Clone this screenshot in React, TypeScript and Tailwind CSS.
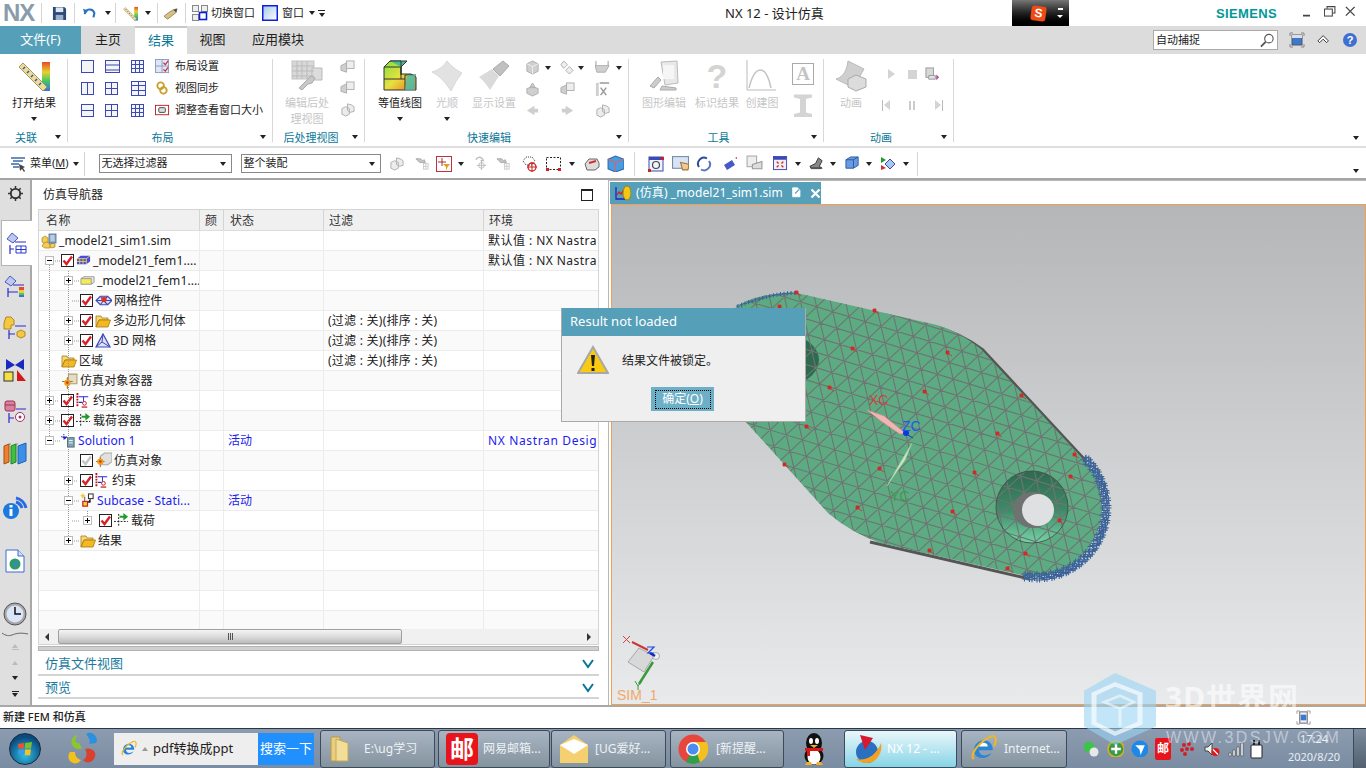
import React from "react";

const cjk = "font-['Noto_Sans','Noto_Sans_CJK_SC',sans-serif]";

const Caret = ({ className = "" }: { className?: string }) => (
  <span className={`inline-block shrink-0 w-0 h-0 border-x-[3.5px] border-x-transparent border-t-[4px] border-t-[#222] ${className}`} />
);

const Sep = ({ className = "" }: { className?: string }) => <span className={`w-px h-[20px] bg-[#d4d4d4] ${className}`} />;

// tiny svg wrapper, most icons live on a 16 grid
const Ic = ({ s = 16, vb = "0 0 16 16", className = "", children }: { s?: number; vb?: string; className?: string; children: React.ReactNode }) => (
  <svg width={s} height={s} viewBox={vb} className={`shrink-0 ${className}`}>
    {children}
  </svg>
);

const Layout = ({ v = [], h = [], w = 13, hh = 13 }: { v?: number[]; h?: number[]; w?: number; hh?: number }) => (
  <svg width={w} height={hh} viewBox={`0 0 ${w} ${hh}`} className="shrink-0">
    <rect x="0.5" y="0.5" width={w - 1} height={hh - 1} fill="#f4f4f4" stroke="#3a49b5" />
    {v.map((x) => (
      <line key={x} x1={x} x2={x} y1="0" y2={hh} stroke="#3a49b5" />
    ))}
    {h.map((y) => (
      <line key={y} x1="0" x2={w} y1={y} y2={y} stroke="#3a49b5" />
    ))}
  </svg>
);

const RulerIcon = ({ s = 32 }: { s?: number }) => (
  <Ic s={s} vb="0 0 32 32">
    <defs>
      <linearGradient id="rain" x1="0" y1="0" x2="0" y2="1">
        <stop offset="0" stopColor="#e84b2a" />
        <stop offset="0.35" stopColor="#e8d030" />
        <stop offset="0.65" stopColor="#45c860" />
        <stop offset="1" stopColor="#3a70e0" />
      </linearGradient>
    </defs>
    <rect x="24" y="2" width="8" height="29" fill="url(#rain)" />
    <path d="M1 7L5 3L29 27L25 31Z" fill="#ecdc9a" stroke="#a89858" />
    <path d="M5 9l2-2M9 13l2-2M13 17l2-2M17 21l2-2M21 25l2-2" stroke="#3a49b5" strokeWidth="1.4" />
  </Ic>
);

const Check = ({ gray = false }: { gray?: boolean }) => (
  <Ic s={13} vb="0 0 13 13">
    <rect x="0.5" y="0.5" width="12" height="12" fill="#fff" stroke="#222" />
    <path d="M2.5 6.5L5.5 10L11 2.5" fill="none" stroke={gray ? "#c4c4c4" : "#d8202a"} strokeWidth="2.4" />
  </Ic>
);

const Expander = ({ t }: { t: string }) => (
  <span className="relative z-10 w-[9px] h-[9px] border border-[#bbb] bg-white flex items-center justify-center">
    <span className="absolute w-[5px] h-px bg-black" />
    {t === "+" && <span className="absolute h-[5px] w-px bg-black" />}
  </span>
);

const Folder = () => (
  <Ic s={16}>
    <path d="M1 3h5l1 2h6v2H4L1 14Z" fill="#f6d77c" stroke="#a87a10" strokeWidth="0.8" />
    <path d="M4 7h11.5L13 14H1Z" fill="#f4b820" stroke="#a87a10" strokeWidth="0.8" />
  </Ic>
);

const SimFile = () => (
  <Ic s={16}>
    <path d="M1 5l3-2 3 2v4l-3 2-3-2z" fill="#f4cc5a" stroke="#b08a20" strokeWidth="0.8" />
    <path d="M3 10l3-1 3 2v4H4l-3-2z" fill="#f4cc5a" stroke="#b08a20" strokeWidth="0.8" />
    <path d="M9 11l3-1 2 1v3l-3 1-2-1z" fill="#f4cc5a" stroke="#b08a20" strokeWidth="0.8" />
    <rect x="8" y="1" width="7" height="9" fill="#8fb0cc" stroke="#48688a" strokeWidth="0.8" />
    <path d="M9.5 3h4M9.5 5h4M9.5 7h4" stroke="#dfeaf4" />
  </Ic>
);

const FemIcon = () => (
  <Ic s={15}>
    <path d="M1 6l4-3h10v6l-4 3H1z" fill="#4a4ae0" />
    <path d="M1 6h10v6M11 6l4-3M4 6v6M7.5 6v6M1 9h10" stroke="#f0e040" strokeWidth="0.9" fill="none" />
  </Ic>
);

const PolyGeom = () => (
  <Ic s={15}>
    <path d="M1 6l3-2h11v6l-3 2" fill="#e8e8e8" stroke="#999" />
    <path d="M1 6h11v6H1z" fill="#f4ec50" stroke="#999" />
  </Ic>
);

const MeshCtrl = () => (
  <Ic s={17}>
    <path d="M1 8l4-4h7l4 4-4 4H5z" fill="#d8dcf4" stroke="#3a49b5" />
    <path d="M5 4l3 4 4-4M5 12l3-4 4 4M1 8h15" stroke="#3a49b5" fill="none" />
    <circle cx="8.5" cy="7" r="2.5" fill="#e03020" />
  </Ic>
);

const Mesh3d = () => (
  <Ic s={16}>
    <path d="M8 1L1 14h14z" fill="#dfe2fa" stroke="#3a49b5" strokeWidth="1.2" />
    <path d="M8 1l-1 8-6 5M7 9l8 5" stroke="#3a49b5" fill="none" />
  </Ic>
);

const Constraint = () => (
  <Ic s={15}>
    <path d="M1.5 0v15" stroke="#c01818" strokeWidth="2" strokeDasharray="2 1" />
    <path d="M3 4h10M3 10h4" stroke="#2a2ad0" strokeWidth="1.2" />
    <path d="M8 4v5" stroke="#2a2ad0" />
    <circle cx="9" cy="11" r="2" fill="none" stroke="#c01818" />
    <path d="M6 15h6" stroke="#c01818" strokeWidth="1.3" />
  </Ic>
);

const Load = () => (
  <Ic s={15}>
    <path d="M0 9h15M5 1v14" stroke="#111" strokeDasharray="2 1.5" />
    <path d="M6 3h4V0l5 4-5 4V5H6z" fill="#1f9a2c" />
  </Ic>
);

const SimObj = () => (
  <Ic s={17}>
    <path d="M5 4l4-3h7v8l-4 3H5z" fill="#e0e0e0" stroke="#aaa" />
    <path d="M1 9h8M5 5v9" stroke="#a07018" />
    <circle cx="5" cy="9" r="3" fill="#f0a018" />
    <circle cx="5" cy="9" r="1.2" fill="#d83020" />
  </Ic>
);

const SimContainer = () => (
  <Ic s={17}>
    <path d="M7 2h8v9H7z" fill="#e4dcc4" stroke="#b0a070" />
    <path d="M1 9h10M6 5v11" stroke="#a07018" />
    <circle cx="6" cy="10" r="3" fill="#f0a018" />
    <circle cx="6" cy="10" r="1.2" fill="#d83020" />
  </Ic>
);

const SolutionIc = () => (
  <Ic s={15}>
    <path d="M0 4h6M3 1v6" stroke="#2a3ad0" strokeWidth="1.2" strokeDasharray="1.5 1" />
    <path d="M1 4l3 3 3-3" fill="#1a2ab0" />
    <rect x="7" y="5" width="7" height="10" fill="#7fa4b4" stroke="#4f6a78" />
    <path d="M8.5 8h4M8.5 10.5h4" stroke="#dff" />
  </Ic>
);

const SubcaseIc = () => (
  <Ic s={15}>
    <path d="M3 0l1 2 2 1-2 1-1 2-1-2-2-1 2-1z" fill="#f4c820" />
    <rect x="9" y="1" width="5" height="5" fill="#fff" stroke="#222" />
    <rect x="3" y="9" width="5" height="5" fill="#f4d040" stroke="#d02018" strokeWidth="1.3" />
    <path d="M11 6v4H8M5 4v5" stroke="#555" />
  </Ic>
);

type Row = {
  level: number;
  exp?: string;
  check?: "red" | "gray";
  icon?: React.ReactNode;
  label?: string;
  blue?: boolean;
  status?: string;
  filter?: boolean;
  env?: string;
  envBlue?: boolean;
};

const rows: Row[] = [
  { level: -1, icon: <SimFile />, label: "_model21_sim1.sim", env: "默认值 : NX Nastra" },
  { level: 0, exp: "-", check: "red", icon: <FemIcon />, label: "_model21_fem1....", env: "默认值 : NX Nastra" },
  { level: 1, exp: "+", icon: <PolyGeom />, label: "_model21_fem1...." },
  { level: 1, check: "red", icon: <MeshCtrl />, label: "网格控件" },
  { level: 1, exp: "+", check: "red", icon: <Folder />, label: "多边形几何体", filter: true },
  { level: 1, exp: "+", check: "red", icon: <Mesh3d />, label: "3D 网格", filter: true },
  { level: 0, icon: <Folder />, label: "区域", filter: true },
  { level: 0, icon: <SimContainer />, label: "仿真对象容器" },
  { level: 0, exp: "+", check: "red", icon: <Constraint />, label: "约束容器" },
  { level: 0, exp: "+", check: "red", icon: <Load />, label: "载荷容器" },
  { level: 0, exp: "-", icon: <SolutionIc />, label: "Solution 1", blue: true, status: "活动", env: "NX Nastran Desig", envBlue: true },
  { level: 1, check: "gray", icon: <SimObj />, label: "仿真对象" },
  { level: 1, exp: "+", check: "red", icon: <Constraint />, label: "约束" },
  { level: 1, exp: "-", icon: <SubcaseIc />, label: "Subcase - Stati...", blue: true, status: "活动" },
  { level: 2, exp: "+", check: "red", icon: <Load />, label: "载荷" },
  { level: 1, exp: "+", icon: <Folder />, label: "结果" },
  { level: 1 },
  { level: 1 },
  { level: 1 },
  { level: 1 },
];

const indent: Record<number, string> = { [-1]: "pl-[2px]", 0: "pl-[6px]", 1: "pl-[25px]", 2: "pl-[44px]" };

const TreeRow = ({ r, i }: { r: Row; i: number }) => (
  <div className={`flex h-[20px] border-b border-[#ececec] text-[12px] leading-[19px] ${i % 2 ? "bg-[#fafafa]" : "bg-white"}`}>
    <div className={`w-[161px] shrink-0 flex items-center gap-[2px] border-r border-[#ececec] overflow-hidden whitespace-nowrap ${indent[r.level]} ${r.blue ? "text-[#1c1cf0]" : "text-[#222]"}`}>
      {r.label && r.level >= 0 && <span className="w-[9px] mr-[5px] shrink-0 flex">{r.exp && <Expander t={r.exp} />}</span>}
      {r.check && <Check gray={r.check === "gray"} />}
      {r.icon}
      {r.label && <span className="tracking-[0.1px]">{r.label}</span>}
    </div>
    <div className="w-[24px] shrink-0 border-r border-[#ececec]" />
    <div className="w-[100px] shrink-0 border-r border-[#ececec] pl-[4px] text-[#1c1cf0]">{r.status}</div>
    <div className="w-[160px] shrink-0 border-r border-[#ececec] pl-[4px] text-[#222] tracking-[0.25px] whitespace-nowrap">{r.filter && "(过滤 : 关)(排序 : 关)"}</div>
    <div className={`w-[113px] shrink-0 pl-[4px] overflow-hidden whitespace-nowrap ${r.envBlue ? "text-[#1c1cf0] tracking-[0.65px]" : "text-[#222] tracking-[0.45px]"}`}>{r.env}</div>
  </div>
);

const TreeGuides = () => (
  <svg className="absolute left-0 top-0 pointer-events-none" width="160" height="320" stroke="#999" strokeDasharray="1 1" fill="none">
    <path d="M10.5 26V205" />
    <path d="M29.5 40V305" />
    <path d="M48.5 280V290" />
    <path d="M14 30h8M14 170h6M14 190h8M14 210h7" />
    <path d="M33 50h7M33 70h7M33 90h7M33 110h7M33 250h6M33 270h7M33 290h7M33 310h7" />
  </svg>
);

// the mesh part, coordinates are screen pixels
const partPath =
  "M745 421L700 350Q715 320 738 306Q755 293 797 293L937 325Q960 332 981 349L1083 459A70 70 0 0 1 1030 577L880 543Q850 532 828 513Z";

const meshLines = (() => {
  const out: string[] = [];
  const cx = 920;
  const cy = 430;
  [17, 77, 137].forEach((deg) => {
    const a = (deg * Math.PI) / 180;
    const dx = Math.cos(a);
    const dy = Math.sin(a);
    for (let k = -26; k <= 26; k++) {
      const ox = cx - dy * k * 14.6;
      const oy = cy + dx * k * 14.6;
      out.push(`M${ox - dx * 420} ${oy - dy * 420}L${ox + dx * 420} ${oy + dy * 420}`);
    }
  });
  return out.join("");
})();

const fringe = (() => {
  const out: string[] = [];
  for (let d = -46; d <= 100; d += 2) {
    const a = (d * Math.PI) / 180;
    [67, 70, 72].forEach((r0, n) => {
      const r = r0 - ((d + n * 2) % 6 === 0 ? 1.5 : 0);
      const x = 1037 + Math.cos(a) * r;
      const y = 508 + Math.sin(a) * r;
      out.push(`M${x - 2.5} ${y}h5M${x} ${y - 2.5}v5`);
    });
  }
  for (let t = 0; t <= 1; t += 0.06) {
    const x = 738 + t * 59;
    const y = 306 - Math.sin(t * 1.6) * 13;
    out.push(`M${x - 2} ${y}h4M${x} ${y - 2}v4`);
  }
  return out.join("");
})();

const loads = [
  [780, 307], [797, 293], [875, 311], [853, 349], [948, 353], [830, 388], [925, 392], [1022, 396], [807, 427], [998, 434],
  [1075, 455], [1071, 477], [785, 465], [880, 469], [975, 473], [858, 508], [953, 512], [1060, 521], [930, 551], [1026, 554], [1008, 569],
];

const PartView = () => (
  <svg className="absolute left-0 top-0" width="754" height="501" viewBox="612 205 754 501">
    <defs>
      <clipPath id="pc">
        <path d={partPath} />
      </clipPath>
      <linearGradient id="cone" x1="0" y1="0" x2="0" y2="1">
        <stop offset="0" stopColor="#2e6a50" />
        <stop offset="0.55" stopColor="#3f8a68" />
        <stop offset="1" stopColor="#74d4a6" />
      </linearGradient>
    </defs>
    <path d="M936 327Q960 333 983 350L1085 460" fill="none" stroke="#555" strokeWidth="3" />
    <path d="M870 542L1030 579" fill="none" stroke="#555" strokeWidth="3" />
    <path d={partPath} fill="#5dab83" />
    <ellipse cx="780" cy="360" rx="39" ry="27" fill="#2e6a50" />
    <circle cx="1032" cy="507" r="36" fill="url(#cone)" />
    <g clipPath="url(#pc)">
      <path d={meshLines} stroke="#6f7472" strokeWidth="1.1" fill="none" />
    </g>
    <circle cx="1032" cy="507" r="36" fill="none" stroke="#3c4a44" strokeWidth="0.8" />
    <ellipse cx="1033" cy="510" rx="20" ry="18" fill="#6e7270" />
    <circle cx="1038" cy="510" r="16" fill="#dfe0e2" />
    <path d={fringe} stroke="#3d6498" strokeWidth="1.1" fill="none" />
    {loads.map(([x, y]) => (
      <path key={`${x}-${y}`} d={`M${x - 2} ${y - 2}h3v3h-3zM${x + 1} ${y + 1}l3 2`} fill="#d22828" stroke="#d22828" strokeWidth="0.8" />
    ))}
    <polygon points="867,410 884,416 905,433 900,434 881,421" fill="#f3b4b4" stroke="#e88" strokeWidth="0.5" />
    <circle cx="906" cy="433" r="3" fill="#0a3ae0" />
    <path d="M906 434l7 4" stroke="#0a3ae0" />
    <polygon points="912,443 896,470 887,486 891,480 905,460" fill="#c8e6c0" stroke="#a8d0a0" strokeWidth="0.5" />
    <text x="869" y="405" fontSize="14" fill="#d84040" fontFamily="Liberation Sans">XC</text>
    <text x="902" y="431" fontSize="14" fill="#1a5af0" fontFamily="Liberation Sans">ZC</text>
    <text x="890" y="501" fontSize="14" fill="#3c9c4c" fontFamily="Liberation Sans">YC</text>
    {/* wcs triad bottom left */}
    <path d="M623 636l7 7M630 636l-7 7" stroke="#d84040" />
    <path d="M632 642l16 8" stroke="#c83838" strokeWidth="2" />
    <path d="M639 648l15 8-10 16-16-10z" fill="#d8d8d8" stroke="#a8a8a8" />
    <circle cx="656" cy="656" r="3.5" fill="#f0f0f0" stroke="#aaa" />
    <path d="M647 647h7l-6 6h6" fill="none" stroke="#1a4ae0" strokeWidth="1.2" />
    <path d="M650 653l5 3" stroke="#0a2ac0" strokeWidth="2.5" />
    <path d="M653 662l-14 22" stroke="#3a9a3a" strokeWidth="2.5" />
    <path d="M635 681l3 5 4-5M638 686v4" fill="none" stroke="#3a9a3a" />
    <text x="617" y="700" fontSize="14" fill="#f2a868" fontFamily="Liberation Sans">SIM_1</text>
  </svg>
);

const GrayBig = ({ d }: { d: React.ReactNode }) => (
  <Ic s={32} vb="0 0 32 32">
    {d}
  </Ic>
);

const BigBtn = ({ icon, label, w, dim = true, arrow = false, label2 }: { icon: React.ReactNode; label: string; w: string; dim?: boolean; arrow?: boolean; label2?: string }) => (
  <div className={`${w} flex flex-col items-center shrink-0`}>
    <div className="h-[33px] mt-[5px] flex items-center">{icon}</div>
    <span className={`text-[11px] leading-[16px] mt-[3px] whitespace-nowrap ${dim ? "text-[#c6c6c6]" : "text-[#222]"}`}>{label}</span>
    {label2 && <span className="text-[11px] leading-[16px] text-[#c6c6c6]">{label2}</span>}
    {arrow && <Caret className="mt-[6px]" />}
  </div>
);

const Group = ({ w, label, children }: { w: string; label: string; children: React.ReactNode }) => (
  <div className={`${w} relative shrink-0 flex flex-col`}>
    <div className="absolute right-0 top-[5px] h-[83px] w-px bg-[#d8d8d8]" />
    <div className="h-[76px] flex">{children}</div>
    <div className="flex-1 flex items-center justify-center relative text-[11px] text-[#0a7799] pr-[16px]">
      {label}
      <Caret className="absolute right-[7px] top-[5px]" />
    </div>
  </div>
);

const GreyMini = ({ kind }: { kind: number }) => {
  const c = "#cfcfcf";
  const e = "#aeaeae";
  if (kind === 0)
    return (
      <Ic s={15}>
        <path d="M2 4l6-3 6 3v8l-6 3-6-3z" fill={c} stroke={e} />
        <path d="M2 4l6 3 6-3M8 7v8" stroke="#eee" fill="none" />
      </Ic>
    );
  if (kind === 1)
    return (
      <Ic s={15}>
        <path d="M4 1l4 4-4 4-3-4zM10 7l4 4-4 4-4-4z" fill="#eee" stroke={e} />
      </Ic>
    );
  if (kind === 2)
    return (
      <Ic s={15}>
        <path d="M0 6h15l-4 7H2z" fill={c} stroke={e} />
        <path d="M1 1v5M14 1v5" stroke="#999" />
      </Ic>
    );
  if (kind === 3)
    return (
      <Ic s={15}>
        <path d="M8 1l-3 5h6zM2 7l6-2 6 2v5l-6 3-6-3z" fill={c} stroke={e} />
      </Ic>
    );
  if (kind === 4)
    return (
      <Ic s={15}>
        <path d="M1 6l6-3v10l-6-2z" fill={c} stroke={e} />
        <rect x="7" y="1" width="8" height="8" fill="#eee" stroke={e} />
      </Ic>
    );
  if (kind === 5)
    return (
      <Ic s={15}>
        <rect x="1" y="1" width="3" height="14" fill={c} />
        <path d="M5 1h10M6 6l6 8M12 6l-6 8" stroke="#999" strokeWidth="1.6" />
      </Ic>
    );
  if (kind === 6)
    return (
      <Ic s={15}>
        <path d="M10 3v3h4v4h-4v3L2 8z" fill={c} />
      </Ic>
    );
  if (kind === 7)
    return (
      <Ic s={15}>
        <path d="M6 3v3H2v4h4v3l8-5z" fill={c} />
      </Ic>
    );
  if (kind === 9)
    return (
      <Ic s={15}>
        <path d="M2 4a4 4 0 0 1 7-1l1 2-3 0" fill="none" stroke="#bbb" strokeWidth="1.4" />
        <circle cx="8" cy="10" r="3" fill="none" stroke="#bbb" />
        <path d="M8 5v10M3 10h10" stroke="#bbb" />
      </Ic>
    );
  if (kind === 10)
    return (
      <Ic s={15}>
        <path d="M1 3h5l2 2 2-1 1 3H5L3 5z" fill="#c4c4c4" stroke="#aaa" />
        <rect x="9" y="8" width="5" height="6" fill="none" stroke="#ccc" />
        <path d="M11.5 8v6M9 11h5" stroke="#ccc" />
      </Ic>
    );
  return (
    <Ic s={15}>
      <path d="M2 7l4-2 4 2v6l-4 2-4-2zM8 2l4 1 3 2v5l-4 1-3-2z" fill="#ececec" stroke={e} />
    </Ic>
  );
};

const TaskBtn = ({ w, icon, label, active = false, gap = "gap-[6px]", className = "" }: { w: string; icon: React.ReactNode; label?: string; active?: boolean; gap?: string; className?: string }) => (
  <div className={`${w} ${className} h-[38px] shrink-0 rounded-[3px] border border-[#3e4a58] flex items-center pl-[7px] ${gap} text-[12px] overflow-hidden whitespace-nowrap ${active ? "bg-linear-to-b from-[#e9f7fb] to-[#85d4e6] text-white" : "bg-linear-to-b from-[#a8b4c2] to-[#84949f] text-[#eef2f6]"}`}>
    {icon}
    {label && <span>{label}</span>}
  </div>
);

const IeIcon = ({ s = 24 }: { s?: number }) => (
  <Ic s={s} vb="0 0 24 24">
    <path d="M4 13c0-5 4-8 8-8s7 3 7 8H8c0 4 5 6 10 2-3 6-14 6-14-2Z" fill="#2a84d8" />
    <path d="M8 10h7c0-4-6-4-7 0Z" fill="#fff" />
    <path d="M20 2c2 1 2 4 0 8M4 20C1 18 4 12 11 6c5-4 9-5 9-4" fill="none" stroke="#f2b820" strokeWidth="1.6" />
  </Ic>
);

export default function App() {
  return (
    <div className={`relative w-[1366px] h-[768px] overflow-hidden bg-white flex flex-col ${cjk} text-[#222]`}>
      {/* title bar */}
      <div className="h-[26px] shrink-0 flex items-center relative text-[11px]">
        <span className="ml-[3px] w-[33px] text-[24px] leading-[26px] font-bold text-[#8a9cac] font-['Liberation_Sans',sans-serif] tracking-[-1px]">NX</span>
        <Sep className="ml-[5px]" />
        <Ic s={15} className="ml-[10px]">
          <path d="M1 1h12l2 2v12H1z" fill="#2c4a78" />
          <rect x="4" y="1.5" width="8" height="5" fill="#dfe8f2" />
          <rect x="4" y="9.5" width="8" height="5.5" fill="#9cb0c8" />
        </Ic>
        <Sep className="ml-[7px]" />
        <Ic s={14} className="ml-[8px]">
          <path d="M2 9c1-6 9-7 11-1l-1 5" fill="none" stroke="#2a74c8" strokeWidth="2.4" />
          <path d="M0 3l6 2-4 5z" fill="#2a74c8" />
        </Ic>
        <Caret className="ml-[8px]" />
        <Sep className="ml-[4px]" />
        <span className="ml-[7px]"><RulerIcon s={15} /></span>
        <Caret className="ml-[7px]" />
        <Sep className="ml-[6px]" />
        <Ic s={15} className="ml-[5px]">
          <path d="M1 11l5-4 5-3 4-1-1 4-4 3-5 4z" fill="#d8c080" stroke="#7a6a40" strokeWidth="0.7" />
          <path d="M11 4l4-1-1 4z" fill="#4a4a4a" />
        </Ic>
        <Sep className="ml-[7px]" />
        <Ic s={16} className="ml-[6px]">
          <rect x="0.5" y="0.5" width="6" height="6" fill="#eee" stroke="#888" />
          <rect x="9.5" y="0.5" width="6" height="6" fill="#eee" stroke="#888" />
          <rect x="0.5" y="9.5" width="6" height="6" fill="#eee" stroke="#888" />
          <rect x="7.5" y="7.5" width="7" height="7" fill="#fff" stroke="#0a22d0" strokeWidth="1.6" />
        </Ic>
        <span className="ml-[3px]">切换窗口</span>
        <Ic s={16} className="ml-[7px]">
          <defs>
            <linearGradient id="win" x1="0" y1="0" x2="1" y2="1">
              <stop offset="0" stopColor="#a8c8e8" />
              <stop offset="1" stopColor="#fff" />
            </linearGradient>
          </defs>
          <rect x="0.75" y="0.75" width="14.5" height="14.5" fill="url(#win)" stroke="#0a22e0" strokeWidth="1.5" />
        </Ic>
        <span className="ml-[4px]">窗口</span>
        <Caret className="ml-[5px]" />
        <span className="ml-[3px] flex flex-col gap-[2px] items-center">
          <span className="w-[7px] h-px bg-[#222]" />
          <Caret />
        </span>
        <span className="absolute left-[725px] top-[4px] text-[13px] leading-[18px] whitespace-nowrap">NX 12 - 设计仿真</span>
        <div className="absolute left-[1012px] top-0 w-[57px] h-[26px] bg-linear-to-b from-[#777] via-[#222] to-black flex items-center pl-[19px]">
          <span className="w-[15px] h-[15px] bg-[#ee4a14] rounded-[3px] rotate-[8deg] text-white text-[12px] leading-[15px] font-bold text-center font-['Liberation_Sans',sans-serif]">S</span>
          <span className="ml-[11px] flex flex-col items-center gap-[5px]">
            <span className="w-[5px] h-[2px] bg-white" />
            <span className="w-0 h-0 border-x-[3px] border-x-transparent border-t-[3px] border-t-white" />
          </span>
        </div>
        <span className="absolute left-[1216px] top-[6px] text-[13px] leading-[16px] font-bold tracking-[0.35px] text-[#009999] font-['Liberation_Sans',sans-serif]">SIEMENS</span>
        <div className="absolute left-[1303px] top-[6px] flex items-center">
          <Ic s={14}>
            <rect x="0" y="10" width="8" height="2" fill="#444" />
          </Ic>
          <Ic s={14} className="ml-[7px]">
            <rect x="0.5" y="3.5" width="9" height="8" fill="#fff" stroke="#444" strokeWidth="1.2" />
            <path d="M3.5 3V0.7h9V8H10" fill="none" stroke="#444" strokeWidth="1.2" />
          </Ic>
          <Ic s={14} className="ml-[7px]">
            <path d="M1 1l10 10M11 1L1 11" stroke="#444" strokeWidth="1.6" />
          </Ic>
        </div>
      </div>

      {/* tabs */}
      <div className="h-[28px] shrink-0 bg-[#dcdcdc] flex items-stretch text-[13px] relative">
        <div className="w-[81px] bg-[#559fb9] text-white flex items-center justify-center">文件(F)</div>
        <div className="w-[54px] flex items-center justify-center">主页</div>
        <div className="w-[52px] bg-white text-[#0a7799] border-t-2 border-[#c8c8c8] flex items-center justify-center">结果</div>
        <div className="w-[51px] flex items-center justify-center">视图</div>
        <div className="ml-[14px] flex items-center">应用模块</div>
        <div className="ml-auto mr-[9px] flex items-center">
          <div className="w-[125px] h-[20px] bg-white border border-[#aaa] flex items-center pl-[2px] pr-[2px] text-[11px]">
            自动捕捉
            <Ic s={15} className="ml-auto">
              <circle cx="9.5" cy="6" r="4.5" fill="#fff" stroke="#555" strokeWidth="1.2" />
              <path d="M6 9.5l-5 5" stroke="#555" strokeWidth="2" />
            </Ic>
          </div>
          <Ic s={16} className="ml-[11px]">
            <path d="M1 4V1h3M12 1h3v3M15 12v3h-3M4 15H1v-3" fill="none" stroke="#888" />
            <rect x="3" y="3" width="10" height="10" fill="#3a7ac8" stroke="#556" />
            <rect x="3" y="3" width="10" height="3" fill="#dde" />
          </Ic>
          <Ic s={14} className="ml-[12px]">
            <path d="M1 9l6-6 6 6-2 2-4-4-4 4z" fill="#fff" stroke="#222" />
          </Ic>
          <span className="ml-[12px] w-[14px] h-[14px] rounded-full bg-[#3f6fd0] text-white text-[11px] leading-[14px] text-center font-bold font-['Liberation_Sans',sans-serif]">?</span>
        </div>
      </div>

      {/* ribbon */}
      <div className="h-[94px] shrink-0 flex border-b-2 border-[#dedede] relative">
        <Group w="w-[68px]" label="关联">
          <BigBtn w="w-[68px]" dim={false} icon={<RulerIcon />} label="打开结果" arrow />
        </Group>
        <Group w="w-[205px]" label="布局">
          <div className="grid grid-cols-[24px_26px_24px] grid-rows-[22px_22px_22px] ml-[13px] mt-[1px] items-center">
            <Layout />
            <Layout w={15} h={[5, 10]} />
            <Layout h={[4.5, 8.5]} v={[4.5, 8.5]} />
            <Layout v={[6.5]} />
            <Layout v={[6.5]} h={[6.5]} />
            <Layout w={15} hh={15} v={[7.5]} h={[4.5, 9.5]} />
            <Layout h={[6.5]} />
            <Layout v={[6.5]} h={[6.5]} />
            <Layout h={[4.5, 8.5]} v={[4.5, 8.5]} />
          </div>
          <div className="flex flex-col mt-[1px] text-[11px] leading-[22px] whitespace-nowrap">
            <div className="flex items-center gap-[5px] h-[22px]">
              <Ic s={15}>
                <rect x="0.5" y="0.5" width="14" height="14" fill="#dfe6f4" stroke="#8a9cc4" />
                <path d="M0 7.5h15M7.5 0v15" stroke="#8a9cc4" />
                <path d="M9 4l2 2 3-4M9 11l2 2 3-4" fill="none" stroke="#d02828" strokeWidth="1.2" />
              </Ic>
              布局设置
            </div>
            <div className="flex items-center gap-[5px] h-[22px]">
              <Ic s={15}>
                <circle cx="6" cy="5" r="3.5" fill="none" stroke="#c8a030" strokeWidth="2" />
                <circle cx="9" cy="10" r="3.5" fill="none" stroke="#c8a030" strokeWidth="2" />
              </Ic>
              视图同步
            </div>
            <div className="flex items-center gap-[5px] h-[22px]">
              <Ic s={15}>
                <rect x="0.5" y="2.5" width="14" height="10" fill="#fff" stroke="#c02020" />
                <rect x="4" y="5" width="7" height="5" rx="1" fill="#ddd" stroke="#444" />
              </Ic>
              调整查看窗口大小
            </div>
          </div>
        </Group>
        <Group w="w-[92px]" label="后处理视图">
          <BigBtn
            w="w-[68px]"
            icon={
              <GrayBig
                d={
                  <>
                    <rect x="1" y="1" width="22" height="18" fill="#d8d8d8" stroke="#c4c4c4" />
                    <path d="M1 6h22M1 11h22M1 16h22M6 1v18M11 1v18M16 1v18M21 8h10v12H21z" stroke="#bbb" fill="#dcdcdc" />
                    <path d="M8 28l8-8 4-4 4 2-3 5-4 1-6 6z" fill="#c8c8c8" stroke="#aaa" />
                  </>
                }
              />
            }
            label="编辑后处"
            label2="理视图"
          />
          <div className="flex flex-col gap-[6px] mt-[6px] ml-[-1px]">
            <GreyMini kind={4} />
            <GreyMini kind={4} />
            <GreyMini kind={8} />
          </div>
        </Group>
        <Group w="w-[264px]" label="快速编辑">
          <BigBtn
            w="w-[70px]"
            dim={false}
            arrow
            label="等值线图"
            icon={
              <Ic s={34} vb="0 0 34 34">
                <defs>
                  <linearGradient id="cg" x1="0" y1="0" x2="1" y2="1">
                    <stop offset="0" stopColor="#80e040" />
                    <stop offset="0.5" stopColor="#e8e040" />
                    <stop offset="1" stopColor="#e87020" />
                  </linearGradient>
                </defs>
                <path d="M1 8l6-6h11v13h10l5 3v13H1z" fill="url(#cg)" stroke="#333" />
                <path d="M1 8h17l0 8M1 20h21v11M18 8V20M22 20l0-4h11" fill="none" stroke="#333" />
                <path d="M18 8l6-6H7M18 2v6" fill="#44c090" stroke="#333" />
                <path d="M24 16l8 0 0 15-10 0z" fill="#40c0b0" opacity="0.8" />
              </Ic>
            }
          />
          <BigBtn
            w="w-[24px]"
            arrow
            label="光顺"
            icon={
              <GrayBig
                d={
                  <path d="M1 12C8 10 13 6 16 1c4 5 9 9 15 12-4 5-8 11-11 18C15 23 9 16 1 12Z" fill="#e2e2e2" stroke="#d8d8d8" />
                }
              />
            }
          />
          <BigBtn
            w="w-[44px] ml-[13px]"
            label="显示设置"
            icon={
              <GrayBig
                d={
                  <>
                    <path d="M1 17l13-8 7 7-9 14c-4-6-7-10-11-13Z" fill="#dadada" />
                    <path d="M15 9l10-8 6 5-9 10z" fill="#c0c0c0" stroke="#aaa" />
                  </>
                }
              />
            }
          />
          <div className="grid grid-cols-[35px_35px_34px] grid-rows-[23px_21px_21px] ml-[9px] mt-[2px] items-center">
            <div className="flex items-center gap-[5px]"><GreyMini kind={0} /><Caret /></div>
            <div className="flex items-center gap-[3px]"><GreyMini kind={1} /><Caret /></div>
            <div className="flex items-center gap-[6px]"><GreyMini kind={2} /><Caret /></div>
            <GreyMini kind={3} />
            <GreyMini kind={4} />
            <GreyMini kind={5} />
            <GreyMini kind={6} />
            <GreyMini kind={7} />
            <GreyMini kind={8} />
          </div>
        </Group>
        <Group w="w-[195px]" label="工具">
          <BigBtn
            w="w-[70px]"
            label="图形编辑"
            icon={
              <GrayBig
                d={
                  <>
                    <path d="M13 2l16-1 1 22-13 2z" fill="#e8e8e8" stroke="#bbb" />
                    <rect x="15" y="5" width="11" height="14" fill="#f6f6f6" />
                    <path d="M2 26l8-9 3 3-7 8zM14 26l14 2v2H12z" fill="#ccc" stroke="#aaa" />
                  </>
                }
              />
            }
          />
          <BigBtn
            w="w-[36px]"
            label="标识结果"
            icon={<span className="text-[34px] leading-[32px] font-bold text-[#d4d4d4] font-['Liberation_Sans',sans-serif]">?</span>}
          />
          <BigBtn
            w="w-[54px]"
            label="创建图"
            icon={
              <GrayBig
                d={
                  <>
                    <path d="M1 0v30h29" fill="none" stroke="#bbb" />
                    <path d="M3 28C9 4 20 4 25 28" fill="none" stroke="#c4c4c4" strokeWidth="1.5" />
                  </>
                }
              />
            }
          />
          <div className="flex flex-col items-center gap-[8px] mt-[9px] ml-[2px]">
            <span className="w-[22px] h-[22px] border border-[#aaa] text-[#c4c4c4] text-[19px] leading-[20px] text-center font-['Liberation_Serif',serif] font-bold">A</span>
            <Ic s={24}>
              <path d="M2 1h12v2l-4 1v9l4 1v2H2v-2l4-1V4L2 3z" fill="#d4d4d4" />
            </Ic>
          </div>
        </Group>
        <Group w="w-[130px]" label="动画">
          <BigBtn
            w="w-[54px]"
            label="动画"
            icon={
              <GrayBig
                d={
                  <>
                    <path d="M1 19C9 17 12 9 13 1l16 8-4 7-12 9z" fill="#cfcfcf" stroke="#bbb" />
                    <path d="M13 19l8-4 10 4v8l-10 4-8-4z" fill="#dcdcdc" stroke="#aaa" />
                  </>
                }
              />
            }
          />
          <div className="grid grid-cols-[27px_14px_26px] grid-rows-[32px_30px] mt-[4px] items-center justify-items-center">
            <span className="w-0 h-0 border-y-[5px] border-y-transparent border-l-[7px] border-l-[#d4d4d4]" />
            <span className="w-[9px] h-[9px] bg-[#d4d4d4]" />
            <Ic s={15}>
              <rect x="1" y="1" width="8" height="10" fill="#d8d8d8" stroke="#999" />
              <path d="M4 9h7v4H4z" fill="#e0e0e0" stroke="#999" />
              <path d="M12 8l3 3-3 3z" fill="#a848a0" />
            </Ic>
            <span className="flex items-center mr-[12px]"><span className="w-px h-[11px] bg-[#bbb] mr-px" /><span className="w-0 h-0 border-y-[5px] border-y-transparent border-r-[6px] border-r-[#d4d4d4]" /></span>
            <span className="flex gap-[2px]"><span className="w-[2px] h-[9px] bg-[#ccc]" /><span className="w-[2px] h-[9px] bg-[#ccc]" /></span>
            <span className="flex items-center ml-[14px]"><span className="w-0 h-0 border-y-[5px] border-y-transparent border-l-[6px] border-l-[#d4d4d4]" /><span className="w-px h-[11px] bg-[#bbb] ml-px" /></span>
          </div>
        </Group>
        <div className="flex-1 relative">
          <Caret className="absolute right-[7px] top-[82px]" />
        </div>
      </div>

      {/* select bar */}
      <div className="h-[32px] shrink-0 flex items-center pt-[1px] border-b-2 border-[#a4a4a4] text-[11px] relative">
        <Ic s={16} className="ml-[10px]">
          <path d="M1 2h14M3 5h10M1 8h8M3 11h6" stroke="#3a6aa8" strokeWidth="1.3" />
          <path d="M9 8l6 3-2 1 2 3-1 1-2-3-2 2z" fill="#444" />
        </Ic>
        <span className="ml-[4px]">菜单(<span className="underline">M</span>)</span>
        <Caret className="ml-[4px]" />
        <Sep className="ml-[5px] h-[24px]" />
        <div className="ml-[14px] w-[133px] h-[19px] border border-[#888] flex items-center pl-[2px] pr-[5px]">
          无选择过滤器
          <Caret className="ml-auto" />
        </div>
        <div className="ml-[9px] w-[140px] h-[19px] border border-[#888] flex items-center pl-[2px] pr-[5px]">
          整个装配
          <Caret className="ml-auto" />
        </div>
        <span className="ml-[8px]"><GreyMini kind={8} /></span>
        <span className="ml-[11px]"><GreyMini kind={10} /></span>
        <span className="ml-[6px] w-[16px] h-[16px] border border-[#c03040] flex items-center justify-center">
          <Ic s={12} vb="0 0 12 12">
            <path d="M4 0v8M0 4h8" stroke="#a03030" />
            <path d="M5 6h7l-3 4v2l-1-1V9z" fill="#e0a020" />
          </Ic>
        </span>
        <Caret className="ml-[6px]" />
        <span className="ml-[10px]"><GreyMini kind={9} /></span>
        <span className="ml-[7px]"><GreyMini kind={10} /></span>
        <Ic s={16} className="ml-[10px]">
          <path d="M5 1l6 0 3 4-3 4H5L2 5z" fill="none" stroke="#444" strokeDasharray="1 1" />
          <circle cx="11" cy="11" r="4" fill="none" stroke="#d02020" strokeWidth="1.3" />
          <path d="M11 6v10M6 11h10" stroke="#d02020" />
        </Ic>
        <Ic s={16} className="ml-[9px]">
          <rect x="0.5" y="1.5" width="14" height="12" fill="none" stroke="#222" strokeDasharray="2 1.5" />
          <rect x="0" y="12" width="3" height="3" fill="#d02020" />
          <rect x="12" y="12" width="3" height="3" fill="#d02020" />
        </Ic>
        <Caret className="ml-[7px]" />
        <Ic s={16} className="ml-[9px]">
          <path d="M1 8l4-5h8l2 4v4l-4 3H3z" fill="#ddd" stroke="#666" />
          <path d="M5 7l7-2" stroke="#d03030" strokeWidth="2" />
        </Ic>
        <Ic s={17} className="ml-[7px]">
          <path d="M1 4l7-3 8 3v9l-8 3-7-3z" fill="#4a9ce0" stroke="#2a6ab0" />
          <path d="M1 4l7 3 8-3M8 7v9" fill="none" stroke="#e06060" />
        </Ic>
        <Sep className="ml-[10px] h-[24px]" />
        <Ic s={16} className="ml-[13px]">
          <rect x="1" y="1" width="14" height="14" fill="#f0f4f8" stroke="#3a49b5" />
          <rect x="1" y="1" width="14" height="3" fill="#3a49b5" />
          <circle cx="8" cy="9" r="3.5" fill="none" stroke="#445" strokeWidth="1.2" />
          <rect x="0" y="13" width="3" height="3" fill="#d02020" />
          <rect x="13" y="1" width="3" height="3" fill="#d02020" />
        </Ic>
        <Ic s={17} className="ml-[8px]">
          <rect x="0.5" y="1.5" width="15" height="11" fill="#d8e4f4" stroke="#7788a8" />
          <path d="M8 7l2 7h5l1-5-3-1z" fill="#f0c890" stroke="#a07838" />
        </Ic>
        <Ic s={16} className="ml-[7px]">
          <path d="M3 11A6 6 0 0 1 11 2.5" fill="none" stroke="#2c4aa0" strokeWidth="2" />
          <path d="M13 5A6 6 0 0 1 5 13.5" fill="none" stroke="#5a78c0" strokeWidth="2" />
        </Ic>
        <Ic s={16} className="ml-[11px]">
          <path d="M1 9l8-5 3 5-8 5z" fill="#4858c8" />
          <path d="M12 2l2-1v2z" fill="#d03030" />
        </Ic>
        <Ic s={17} className="ml-[7px]">
          <rect x="1" y="1" width="9" height="10" fill="#eee" stroke="#aaa" />
          <path d="M6 9l9-3v7H6z" fill="#ddd" stroke="#999" />
        </Ic>
        <Ic s={15} className="ml-[10px]">
          <rect x="0.5" y="0.5" width="14" height="14" fill="#f0f0f4" stroke="#3a49b5" />
          <rect x="1" y="1" width="13" height="3" fill="#3a49b5" />
          <path d="M4 6l2 2M11 6L9 8M4 12l2-2M11 12L9 10" stroke="#d02828" strokeWidth="1.5" />
        </Ic>
        <Caret className="ml-[7px]" />
        <Ic s={15} className="ml-[8px]">
          <path d="M1 11l6-3 3-6 4 3-3 6 3 2H2z" fill="#888" stroke="#333" />
          <path d="M2 12h11v2H2z" fill="#555" />
        </Ic>
        <Caret className="ml-[6px]" />
        <Ic s={15} className="ml-[9px]">
          <path d="M1 4l5-3h8v9l-5 3H1z" fill="#6a9ae0" stroke="#2a5aa0" />
          <path d="M1 4h8v9M9 4l5-3" fill="none" stroke="#2a5aa0" />
        </Ic>
        <Caret className="ml-[6px]" />
        <Ic s={16} className="ml-[8px]">
          <path d="M1 1l5 3-5 3z" fill="#1f9a2c" />
          <path d="M1 14V9l5 3z" fill="#d03030" />
          <path d="M5 8l5-5 5 5-5 5z" fill="#a8c8ec" stroke="#3a4ab0" />
        </Ic>
        <Caret className="ml-[7px]" />
        <Sep className="ml-[8px] h-[24px]" />
        <Caret className="absolute right-[7px] top-[21px]" />
      </div>

      {/* main */}
      <div className="flex-1 min-h-0 flex border-b-2 border-[#a8a8a8]">
        {/* side strip */}
        <div className="w-[32px] shrink-0 bg-[#dfdfdf] border-r-2 border-[#a8a8a8] flex flex-col items-center relative">
          <div className="h-[40px] flex items-center pb-[14px]">
            <Ic s={15}>
              <circle cx="8" cy="8" r="5" fill="none" stroke="#333" strokeWidth="2" />
              <path d="M8 0v3M8 13v3M0 8h3M13 8h3M2.5 2.5l2 2M11.5 11.5l2 2M13.5 2.5l-2 2M4.5 11.5l-2 2" stroke="#333" strokeWidth="1.6" />
            </Ic>
          </div>
          <div className="w-[31px] h-[46px] ml-[3px] bg-white border border-r-0 border-[#b4b4b4] flex items-center justify-center">
            <Ic s={24} vb="0 0 24 24">
              <path d="M2 8l5-6 6 5-5 5z" fill="#bcc8ee" stroke="#4a5cc0" />
              <path d="M10 11h11M5 14v9M5 18h4" stroke="#2a2ad0" strokeWidth="1.2" />
              <path d="M11 15h10v7H11zM16 15v7M11 18.5h10" fill="none" stroke="#2a3ad0" />
            </Ic>
          </div>
          <div className="h-[40px] flex items-center">
            <Ic s={24} vb="0 0 24 24">
              <path d="M2 8l5-6 6 5-5 5z" fill="#bcc8ee" stroke="#4a5cc0" />
              <path d="M10 11h11M5 14v9M5 18h10" stroke="#2a2ad0" strokeWidth="1.2" />
              <rect x="16" y="13" width="5" height="3" fill="#e84b2a" />
              <rect x="16" y="16" width="5" height="3" fill="#e8d030" />
              <rect x="16" y="19" width="5" height="2" fill="#45c860" />
              <rect x="16" y="21" width="5" height="2" fill="#3a70e0" />
            </Ic>
          </div>
          <div className="h-[42px] flex items-center">
            <Ic s={24} vb="0 0 24 24">
              <path d="M3 2h5l3 3v5H8v4H1V8z" fill="#f4c840" stroke="#b08820" />
              <path d="M12 11h11M6 15v9M6 19h6" stroke="#2a2ad0" strokeWidth="1.2" />
              <path d="M14 17l4-2 4 2v4l-4 2-4-2z" fill="#f4c840" stroke="#b08820" />
            </Ic>
          </div>
          <div className="h-[43px] flex items-center">
            <Ic s={24} vb="0 0 24 24">
              <path d="M3 1l9 6 9-6v11l-9-5-9 5z" fill="#1a2ac0" />
              <rect x="1" y="14" width="9" height="9" fill="#f4e040" stroke="#333" />
              <path d="M14 12l9 11h-9z" fill="#d81818" />
            </Ic>
          </div>
          <div className="h-[42px] flex items-center">
            <Ic s={24} vb="0 0 24 24">
              <rect x="2" y="1" width="10" height="10" rx="2" fill="#d880a0" stroke="#a03050" />
              <path d="M2 5h10" stroke="#a03050" />
              <path d="M13 9h10M6 13v10M6 18h5" stroke="#2a2ad0" strokeWidth="1.2" />
              <circle cx="17" cy="17" r="4.5" fill="#fff" stroke="#a03060" />
              <circle cx="17" cy="17" r="1.5" fill="#a03060" />
            </Ic>
          </div>
          <div className="h-[41px] flex items-center">
            <Ic s={24} vb="0 0 24 24">
              <path d="M1 4l5-2v18l-5 2z" fill="#f08030" stroke="#a05010" />
              <path d="M8 4l5-2v18l-5 2z" fill="#40c040" stroke="#208020" />
              <path d="M15 4l8-3v18l-8 3z" fill="#3a90e8" stroke="#2060b0" />
              <path d="M6 2h2M13 2h2" stroke="#888" />
            </Ic>
          </div>
          <div className="h-[68px] flex items-center">
            <Ic s={26} vb="0 0 26 26">
              <path d="M14 3c5 1 9 5 10 10M14 7c3 1 5 3 6 6" fill="none" stroke="#2a6ae0" strokeWidth="3" />
              <circle cx="9" cy="16" r="8" fill="#1a7ae0" />
              <rect x="7.5" y="14" width="3" height="7" fill="#fff" />
              <rect x="7.5" y="10" width="3" height="2.5" fill="#fff" />
            </Ic>
          </div>
          <div className="h-[38px] flex items-center">
            <Ic s={24} vb="0 0 24 24">
              <path d="M3 1h12l6 6v16H3z" fill="#fff" stroke="#3a6ad0" />
              <path d="M15 1v6h6" fill="#d0e0f8" stroke="#3a6ad0" />
              <circle cx="12" cy="15" r="5.5" fill="#2ca05a" />
              <path d="M9 12c2 2 5 1 6-1 1 3-1 7-3 8" fill="#3a88c0" />
            </Ic>
          </div>
          <div className="flex-1" />
          <Ic s={24} vb="0 0 24 24">
            <circle cx="12" cy="12" r="11" fill="#a8a8a8" stroke="#555" />
            <circle cx="12" cy="12" r="8.5" fill="#d8e6f8" />
            <path d="M12 5v7h6" fill="none" stroke="#111" strokeWidth="1.5" />
          </Ic>
          <svg width="28" height="8" viewBox="0 0 28 8" className="mt-[4px] mb-[3px]">
            <path d="M1 3c4 3 7 3 10 2s7-3 16-1" fill="none" stroke="#666" />
          </svg>
          <div className="h-[56px] flex flex-col items-center justify-between mb-[8px]">
            <span className="flex flex-col items-center gap-[1px] mt-[3px]">
              <span className="w-0 h-0 border-x-[3.5px] border-x-transparent border-b-[4px] border-b-[#bbb]" />
              <span className="w-[7px] h-px bg-[#bbb]" />
            </span>
            <span className="w-0 h-0 border-x-[3.5px] border-x-transparent border-b-[4px] border-b-[#bbb]" />
            <Caret />
            <span className="flex flex-col items-center gap-[1px]">
              <span className="w-[7px] h-px bg-[#222]" />
              <Caret />
            </span>
          </div>
        </div>

        {/* navigator */}
        <div className="w-[577px] shrink-0 flex flex-col border-r border-[#b8b8b8] pl-[6px] pr-[9px]">
          <div className="h-[29px] flex items-center justify-between pt-[1px] pl-[5px] pr-[6px] text-[12px]">
            <span>仿真导航器</span>
            <span className="w-[12px] h-[12px] border border-[#222] border-t-2" />
          </div>
          <div className="border border-[#d4d4d4] text-[12px]">
            <div className="relative">
              <div className="flex h-[21px] bg-[#f0f0f0] border-b border-[#dcdcdc] leading-[21px] text-[#333]">
                <div className="w-[161px] shrink-0 pl-[7px] border-r border-[#d4d4d4] tracking-[0.5px]">名称</div>
                <div className="w-[24px] shrink-0 pl-[5px] border-r border-[#d4d4d4]">颜</div>
                <div className="w-[100px] shrink-0 pl-[6px] border-r border-[#d4d4d4]">状态</div>
                <div className="w-[160px] shrink-0 pl-[5px] border-r border-[#d4d4d4]">过滤</div>
                <div className="w-[113px] shrink-0 pl-[5px]">环境</div>
              </div>
              <div className="relative">
                {rows.map((r, i) => (
                  <TreeRow key={i} r={r} i={i} />
                ))}
                <TreeGuides />
              </div>
            </div>
            <div className="h-[15px] -mt-[2px] relative bg-[#f0f0f0] flex items-center">
              <span className="ml-[6px] w-0 h-0 border-y-[4px] border-y-transparent border-r-[4px] border-r-[#333]" />
              <div className="ml-[9px] w-[344px] h-[15px] rounded-[2px] border border-[#a0a0a0] bg-linear-to-b from-[#f4f4f4] via-[#dcdcdc] to-[#bcbcbc] flex items-center justify-center gap-px">
                <span className="w-px h-[7px] bg-[#555]" />
                <span className="w-px h-[7px] bg-[#555]" />
                <span className="w-px h-[7px] bg-[#555]" />
              </div>
              <span className="ml-auto mr-[7px] w-0 h-0 border-y-[4px] border-y-transparent border-l-[4px] border-l-[#333]" />
            </div>
          </div>
          <div className="h-[5px] mt-[1px] shrink-0 bg-[#d0d0d0] border border-[#b4b4b4]" />
          <div className="h-[25px] shrink-0 flex items-center justify-between pt-[2px] pl-[7px] pr-[5px] text-[13px] text-[#1a7a9e] border-b-2 border-[#d4d4d4]">
            仿真文件视图
            <Ic s={12} vb="0 0 12 12">
              <path d="M1 2l5 7 5-7" fill="none" stroke="#0a7799" strokeWidth="2" />
            </Ic>
          </div>
          <div className="h-[23px] shrink-0 flex items-center justify-between pt-[2px] pl-[7px] pr-[5px] text-[13px] text-[#1a7a9e] border-b-2 border-[#d4d4d4]">
            预览
            <Ic s={12} vb="0 0 12 12">
              <path d="M1 2l5 7 5-7" fill="none" stroke="#0a7799" strokeWidth="2" />
            </Ic>
          </div>
        </div>

        {/* viewport */}
        <div className="flex-1 min-w-0 flex flex-col">
          <div className="h-[24px] shrink-0 flex pl-[1px] border-t border-[#b8b8b8]">
            <div className="w-[211px] h-[22px] mt-[1px] bg-[#559fb9] text-white text-[12px] leading-[20px] flex items-center pl-[5px] gap-[3px] whitespace-nowrap">
              <Ic s={16}>
                <path d="M1 2v12h9" fill="none" stroke="#2222c0" strokeWidth="1.3" />
                <path d="M2 10l2-3 2 2 3-4" fill="none" stroke="#d02020" strokeWidth="1.3" />
                <ellipse cx="12" cy="8" rx="4" ry="7" fill="#f2c814" stroke="#a08010" />
              </Ic>
              <span className="ml-[2px] tracking-[0.1px]">(仿真) _model21_sim1.sim</span>
              <Ic s={13} className="ml-[5px]">
                <path d="M2 1h6l3 3v8H2z" fill="#fff" stroke="#fff" />
                <path d="M5 8l5-5" stroke="#559fb9" strokeWidth="1.4" />
              </Ic>
              <Ic s={11} vb="0 0 11 11" className="ml-[3px]">
                <path d="M1.5 1.5l8 8M9.5 1.5l-8 8" stroke="#fff" strokeWidth="2.2" />
              </Ic>
            </div>
          </div>
          <div className="relative flex-1 min-h-0 ml-[2px] border border-[#f0a050] bg-linear-to-b from-[#b5b6b8] to-[#e9eaec] overflow-hidden">
            <PartView />
          </div>
        </div>
      </div>

      {/* status */}
      <div className="h-[21px] shrink-0 flex items-center pl-[3px] text-[11px] font-medium relative">
        新建 FEM 和仿真
        <Ic s={15} className="absolute left-[1296px] top-[3px]">
          <path d="M1 4V1h3M12 1h3v3M15 12v3h-3M4 15H1v-3" fill="none" stroke="#999" />
          <rect x="4" y="2" width="8" height="12" fill="#eef" stroke="#666" />
          <rect x="5" y="5" width="6" height="6" fill="#3a7ac8" />
        </Ic>
      </div>

      {/* taskbar */}
      <div className="h-[40px] shrink-0 border-t border-[#2a3644] bg-linear-to-b from-[#8c9cb0] to-[#7a8ca2] flex items-center relative">
        <div className="w-[32px] h-[32px] ml-[9px] shrink-0 rounded-full border border-[#1a2a3a] bg-[radial-gradient(circle_at_50%_70%,#30c0e8,#0a4a7c_70%)] flex items-center justify-center">
          <Ic s={16}>
            <path d="M1 3l6-1v5.5H1.5z" fill="#f05030" />
            <path d="M8 2l7-1-1 6.5H8z" fill="#78c030" />
            <path d="M1.5 8.5H7V14l-6-1z" fill="#30a0e8" />
            <path d="M8 8.5h6l-1 6-5-.5z" fill="#f8c020" />
          </Ic>
        </div>
        <Ic s={34} vb="0 0 34 34" className="ml-[25px]">
          <path d="M12 3a7 7 0 1 0 4 13l-3-5c-4 1-5-4-1-8Z" fill="#8ac82a" />
          <path d="M20 2a7 7 0 0 1 10 9l-7 1c2-3 0-6-3-10Z" fill="#2a90e0" />
          <path d="M4 20a7 7 0 0 0 3 11c3 1 6 0 8-3-3-1-6-3-6-8Z" fill="#f4c020" />
          <path d="M19 17c6-2 12 2 10 8s-9 7-12 3c3-1 5-6 2-11Z" fill="#d84030" />
        </Ic>
        <div className="ml-[14px] w-[144px] h-[32px] bg-[#eeeeee] flex items-center pl-[6px]">
          <IeIcon s={18} />
          <span className="ml-[4px] w-0 h-0 border-x-[3px] border-x-transparent border-b-[4px] border-b-[#999]" />
          <span className="ml-[5px] text-[13px] text-[#222]">pdf转换成ppt</span>
        </div>
        <div className="w-[56px] h-[32px] bg-[#2090ff] text-white text-[13px] flex items-center justify-center whitespace-nowrap">搜索一下</div>
        <div className="ml-[6px] flex items-center">
          <TaskBtn
            w="w-[115px]"
            gap="gap-[10px]"
            label="E:\ug学习"
            icon={
              <Ic s={26} vb="0 0 26 26">
                <path d="M3 1h9v24H3z" fill="#e8cf80" stroke="#b89a48" />
                <path d="M8 3l12 4v18H8z" fill="#f2de98" stroke="#c4a858" />
              </Ic>
            }
          />
          <TaskBtn
            w="w-[112px]"
            className="ml-[3px]"
            gap="gap-[5px]"
            label="网易邮箱..."
            icon={<span className="w-[32px] h-[32px] shrink-0 rounded-[4px] bg-[#e8141c] text-white text-[24px] leading-[32px] text-center font-bold">邮</span>}
          />
          <TaskBtn
            w="w-[115px]"
            className="ml-[1px]"
            label="[UG爱好..."
            icon={
              <Ic s={30} vb="0 0 30 30">
                <path d="M1 11L15 1l14 10v18H1z" fill="#f4d070" />
                <path d="M1 11l14 9 14-9-14-6z" fill="#fff" />
              </Ic>
            }
          />
          <TaskBtn
            w="w-[114px]"
            className="ml-[4px]"
            gap="gap-[8px]"
            label="[新提醒..."
            icon={
              <Ic s={30} vb="0 0 30 30">
                <circle cx="15" cy="15" r="14.5" fill="#e8453c" />
                <path d="M15 15L27 23A14.5 14.5 0 0 1 8 28Z" fill="#2ea04a" />
                <path d="M15 8h13.5A14.5 14.5 0 0 1 22 28Z" fill="#f4c020" />
                <circle cx="15" cy="15" r="7" fill="#fff" />
                <circle cx="15" cy="15" r="5.5" fill="#4a8cf0" />
              </Ic>
            }
          />
          <div className="w-[60px] shrink-0 flex justify-center">
            <Ic s={34} vb="0 0 24 34">
              <ellipse cx="12" cy="11" rx="8" ry="10" fill="#111" />
              <ellipse cx="12" cy="24" rx="9.5" ry="9" fill="#111" />
              <ellipse cx="12" cy="25" rx="6.5" ry="7.5" fill="#fff" />
              <ellipse cx="9" cy="9" rx="2" ry="3" fill="#fff" />
              <ellipse cx="15" cy="9" rx="2" ry="3" fill="#fff" />
              <path d="M8 13h8l-4 3z" fill="#f4b020" />
              <path d="M3 16h18v3H8v5H5v-5H3z" fill="#d81818" />
              <path d="M3 33h7l-1-3H5zM21 33h-7l1-3h4z" fill="#f4b020" />
            </Ic>
          </div>
          <TaskBtn
            w="w-[113px]"
            active
            gap="gap-[3px]"
            label="NX 12 - ..."
            icon={
              <Ic s={32} vb="0 0 32 32">
                <circle cx="15" cy="19" r="11" fill="#2a70c0" />
                <path d="M4 26c10 2 20-3 25-16 2 9-4 20-14 20-5 0-9-2-11-4Z" fill="#f4a020" />
                <path d="M8 2l13 3-8 12z" fill="#d81830" />
              </Ic>
            }
          />
          <TaskBtn w="w-[106px]" className="ml-[4px]" gap="gap-[5px]" label="Internet..." icon={<IeIcon s={30} />} />
        </div>
        <div className="ml-[16px] flex items-center h-full">
          <Ic s={16}>
            <circle cx="6" cy="6" r="5.5" fill="#3cc44a" />
            <circle cx="11" cy="11" r="4.5" fill="#e8e8e8" />
          </Ic>
          <Ic s={17} className="ml-[8px]">
            <circle cx="8.5" cy="8.5" r="7.5" fill="#3a9a4a" stroke="#d4b020" strokeWidth="1.5" />
            <path d="M8.5 4v9M4 8.5h9" stroke="#fff" strokeWidth="2.2" />
          </Ic>
          <Ic s={17} className="ml-[7px]">
            <circle cx="8.5" cy="8.5" r="8" fill="#1e88e8" />
            <path d="M4 5l9 0-4 9-1-5z" fill="#fff" />
          </Ic>
          <span className="ml-[7px] w-[16px] h-[22px] rounded-[2px] bg-[#e8141c] text-white text-[12px] leading-[22px] text-center font-bold">邮</span>
          <Ic s={16} className="ml-[8px]">
            <circle cx="5" cy="4" r="2" fill="#d02028" />
            <circle cx="10" cy="3" r="2" fill="#d02028" />
            <circle cx="3" cy="9" r="2" fill="#d02028" />
            <circle cx="8" cy="8" r="2" fill="#d02028" />
            <circle cx="13" cy="8" r="2" fill="#d02028" />
            <circle cx="6" cy="13" r="2" fill="#d02028" />
          </Ic>
          <Ic s={16} className="ml-[9px]">
            <path d="M1 6h3l4-4v12l-4-4H1z" fill="#f0f0f0" stroke="#444" />
            <circle cx="11.5" cy="11" r="4" fill="#e01818" />
            <path d="M9 8.5l5 5" stroke="#fff" strokeWidth="1.3" />
          </Ic>
          <Ic s={16} className="ml-[8px]">
            <path d="M1 12h2v3H1zM5 9h2v6H5zM9 6h2v9H9zM13 2h2v13h-2z" fill="#fff" stroke="#333" strokeWidth="0.5" />
          </Ic>
          <Ic s={20} vb="0 0 20 20" className="ml-[4px]">
            <rect x="3" y="6" width="11" height="13" rx="1" fill="#fff" stroke="#222" />
            <path d="M6 1v5M11 1v5" stroke="#222" strokeWidth="2" />
          </Ic>
        </div>
        <div className="absolute left-[1285px] top-[2px] w-[58px] text-white text-[11px] leading-[16px] text-center whitespace-nowrap">
          <div className="text-[#e8eef4]">17:24</div>
          <div className="mt-[2px] text-[#e8eef4]">2020/8/20</div>
        </div>
        <div className="absolute right-0 top-0 w-[13px] h-full bg-linear-to-b from-[#7c8c9e] to-[#52606e] border-l border-[#3e4a58]" />
      </div>

      {/* result dialog */}
      <div className="absolute left-[561px] top-[308px] w-[245px] h-[114px] bg-[#efefef] border border-[#aaa] border-t-0 flex flex-col">
        <div className="h-[28px] bg-[#559fb9] text-white text-[13px] leading-[27px] pl-[8px] font-['Noto_Sans',sans-serif]">Result not loaded</div>
        <div className="flex items-center mt-[9px] pl-[15px] text-[12px]">
          <Ic s={32} vb="0 0 32 32">
            <path d="M16 2L31 28H1Z" fill="#f8ca10" stroke="#a8a8a8" strokeWidth="2" />
            <path d="M14 10h4l-1 11h-2zM14.5 23h3v3h-3z" fill="#222" />
          </Ic>
          <span className="ml-[13px]">结果文件被锁定。</span>
        </div>
        <div className="flex justify-center mt-[10px] pr-[2px]">
          <div className="w-[63px] h-[24px] bg-[#6cafc6] text-white text-[12px] flex items-center justify-center">
            <span className="w-[56px] h-[19px] border border-dotted border-black flex items-center justify-center whitespace-nowrap">确定(<span className="underline">O</span>)</span>
          </div>
        </div>
      </div>

      {/* watermark */}
      <div className="absolute left-[1084px] top-[673px] pointer-events-none">
        <svg width="72" height="72" viewBox="0 0 72 89" preserveAspectRatio="none">
          <path d="M31 0L72 22V66L31 89L0 66V22Z" fill="#9ad4f4" opacity="0.6" />
          <path d="M10 26L31 14L56 26V62L31 75L10 62Z" fill="none" stroke="#fff" strokeWidth="5" opacity="0.65" />
          <path d="M20 36L36 28L50 36L36 44Z M36 44V66" fill="none" stroke="#fff" strokeWidth="3" opacity="0.55" />
        </svg>
      </div>
      <div className="absolute left-[1165px] top-[681px] w-[180px] text-white/60 text-[30px] leading-[34px] font-bold tracking-[1px] whitespace-nowrap pointer-events-none">3D世界网</div>
      <div className="absolute left-[1166px] top-[729px] text-white/45 text-[16px] leading-[18px] tracking-[2.4px] whitespace-nowrap pointer-events-none font-['Liberation_Sans',sans-serif]">WWW.3DSJW.COM</div>
    </div>
  );
}
